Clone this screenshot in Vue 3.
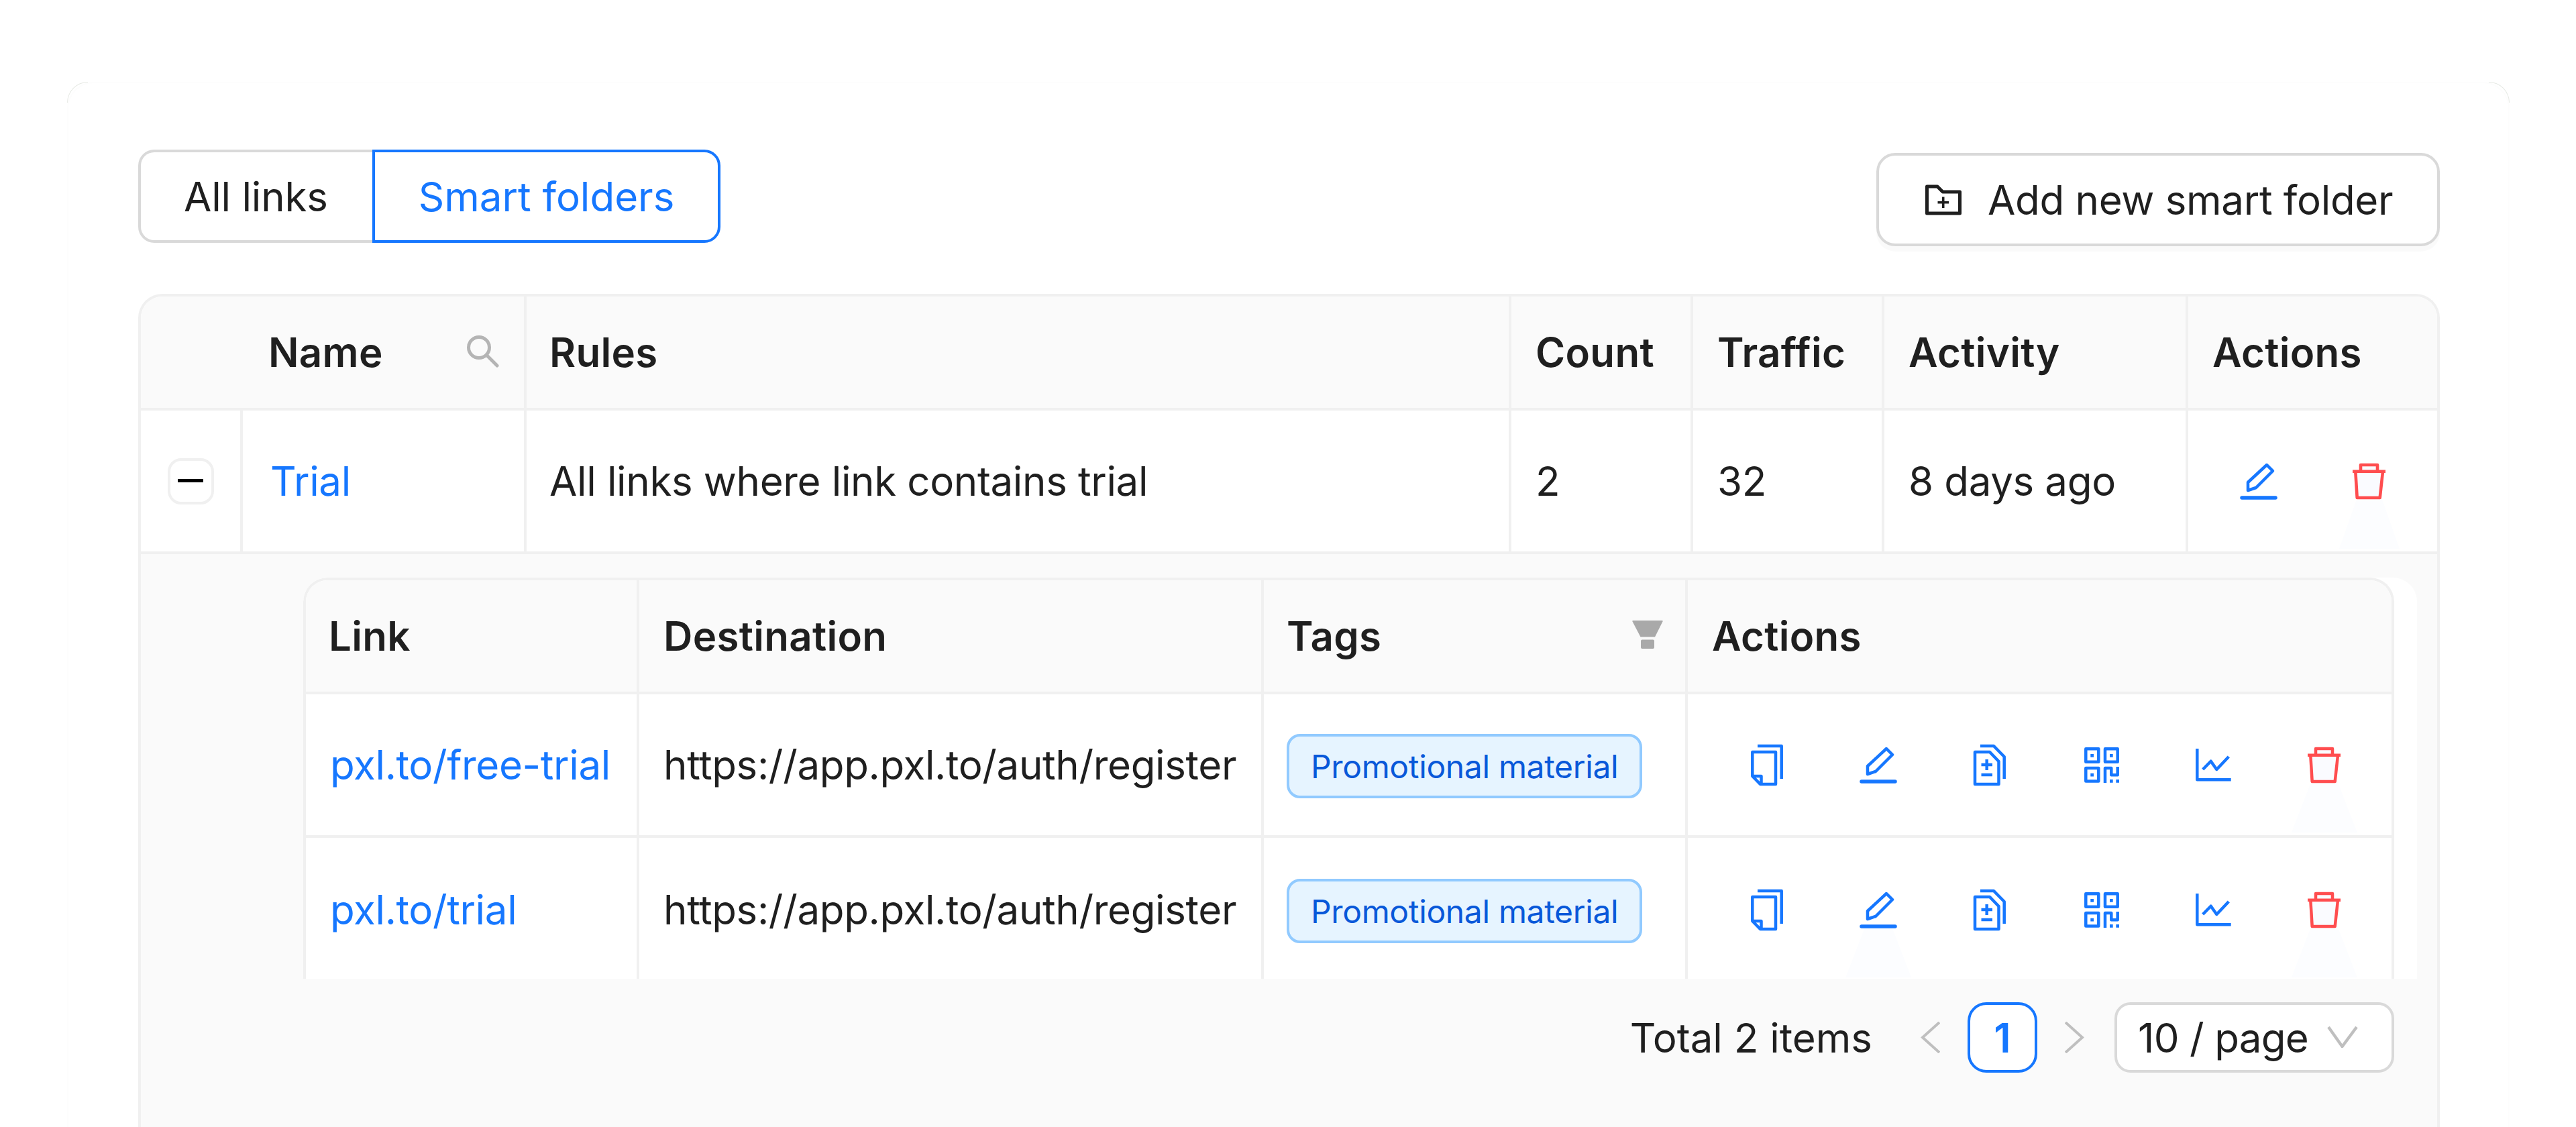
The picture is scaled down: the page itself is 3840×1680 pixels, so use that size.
<script setup>
const icons = {
  copy: { box: '-1 5 70 70', d: 'M20 12H55.7V61M12.3 21H47V69H24L12.3 57ZM12.3 57H25.5V69' },
  edit: { box: '165 5 70 70', d: 'M212 16L221 25L196 50L184 54V42Z', thick: 'M175 65H225' },
  doc: { box: '1 5 70 70', d: 'M14 21H36L49.5 35V69H14ZM22 12H42L57.7 28V61M23.5 40H40M31.7 32V48M23.5 55H40' },
  qr: {
    box: '167 5 70 70',
    d: 'M178.3 16.3H197.3V35.7H178.3ZM207 16.3H225.7V35.7H207ZM178.3 45H197.3V64.4H178.3ZM207 67V45H216.3V55.3H225.7V43',
    fill: 'M185.3 24H190V28.7H185.3ZM214 24H218.7V28.7H214ZM185.3 52.7H190V57.4H185.3ZM214 62H218.7V66.7H214ZM223.3 62H228V66.7H223.3Z',
  },
  chart: { box: '3 5 70 70', d: 'M14.3 16V62.3H64.7M22.7 47L34.7 34.7L43.3 47L61.3 28' },
  trash: { box: '170 5 70 70', d: 'M184.3 26L186.7 65H220.7L225 26M192 25V16H217V25M180 25.7H229', danger: true },
}
const rowIcons = [
  [{ n: 'copy' }, { n: 'edit' }, { n: 'doc' }, { n: 'qr' }, { n: 'chart' }, { n: 'trash', glow: true }],
  [{ n: 'copy' }, { n: 'edit', glow: true }, { n: 'doc' }, { n: 'qr' }, { n: 'chart' }, { n: 'trash', glow: true }],
]
const links = ['pxl.to/free-trial', 'pxl.to/trial']
</script>

<template>
  <div class="card">
    <div class="toolbar">
      <div class="tabs">
        <button class="tab">All links</button>
        <button class="tab active">Smart folders</button>
      </div>
      <button class="add">
        <svg class="folder" viewBox="20 4 54 46" width="54" height="46" fill="none" stroke="#1f1f1f" stroke-width="5" stroke-linejoin="round">
          <path d="M22.5 7H38L46 15H71.5V47H22.5Z" />
          <path d="M38.5 30.7H55M46.7 22.5V39" stroke-width="3.6" />
        </svg>
        <span>Add new smart folder</span>
      </button>
    </div>

    <div class="table">
      <div class="row head outer-cols">
        <div class="cell span2 name-head">
          <span>Name</span>
          <svg viewBox="0 0 50 50" width="50" height="50" fill="none" stroke="#b4b4b4" stroke-width="5">
            <circle cx="20" cy="19" r="15.5" />
            <path d="M31 30L47 46" stroke-linecap="round" />
          </svg>
        </div>
        <div class="cell rules">Rules</div>
        <div class="cell">Count</div>
        <div class="cell">Traffic</div>
        <div class="cell">Activity</div>
        <div class="cell last">Actions</div>
      </div>
      <div class="row body outer-cols">
        <div class="cell expand"><span class="minus"></span></div>
        <div class="cell link trial">Trial</div>
        <div class="cell rules">All links where link contains trial</div>
        <div class="cell">2</div>
        <div class="cell">32</div>
        <div class="cell">8 days ago</div>
        <div class="cell last outer-actions">
          <span class="ic">
            <svg :viewBox="icons.edit.box" width="70" height="70" fill="none" stroke="#1677ff" stroke-width="4.5" stroke-linejoin="round">
              <path :d="icons.edit.d" />
              <path :d="icons.edit.thick" stroke-width="5.5" stroke-linecap="round" />
            </svg>
          </span>
          <span class="ic">
            <svg class="trash" :viewBox="icons.trash.box" width="70" height="70" fill="none" stroke="#ff4d4f" stroke-width="4.6" stroke-linejoin="round">
              <path :d="icons.trash.d" />
            </svg>
            <i class="glow short"></i>
          </span>
        </div>
      </div>

      <div class="expanded">
        <div class="sheet">
          <div class="nested">
            <div class="row head inner-cols">
              <div class="cell flush">Link</div>
              <div class="cell">Destination</div>
              <div class="cell flush tags-head">
                <span>Tags</span>
                <svg viewBox="0 0 46 42" width="46" height="42" fill="#a9a9a9">
                  <path d="M1 0H45Q46 0 45.5 1.5L34 24.5H12.5L0.5 1.5Q0 0 1 0Z" />
                  <rect x="13" y="28.5" width="20" height="13.5" rx="2" />
                </svg>
              </div>
              <div class="cell last">Actions</div>
            </div>
            <div v-for="(link, r) in links" :key="link" class="row body inner-cols" :class="{ noline: r === 1 }">
              <div class="cell link">{{ link }}</div>
              <div class="cell">https://app.pxl.to/auth/register</div>
              <div class="cell flush"><span class="tag">Promotional material</span></div>
              <div class="cell last inner-actions">
                <span v-for="it in rowIcons[r]" :key="it.n" class="ic">
                  <svg
                    :viewBox="icons[it.n].box"
                    :class="{ trash: icons[it.n].danger }"
                    width="70"
                    height="70"
                    fill="none"
                    :stroke="icons[it.n].danger ? '#ff4d4f' : '#1677ff'"
                    stroke-width="4.5"
                    stroke-linejoin="round"
                  >
                    <path :d="icons[it.n].d" />
                    <path v-if="icons[it.n].thick" :d="icons[it.n].thick" stroke-width="5.5" stroke-linecap="round" />
                    <path v-if="icons[it.n].fill" :d="icons[it.n].fill" fill="#1677ff" stroke="none" />
                  </svg>
                  <i v-if="it.glow" class="glow"></i>
                </span>
              </div>
            </div>
          </div>
        </div>

        <div class="pager">
          <span class="total">Total 2 items</span>
          <svg class="prev" viewBox="0 0 29 47" width="29" height="47" fill="none" stroke="#bfbfbf" stroke-width="4">
            <path d="M28 1L3 23.5L28 46" />
          </svg>
          <span class="page">1</span>
          <svg class="next" viewBox="0 0 29 47" width="29" height="47" fill="none" stroke="#bfbfbf" stroke-width="4">
            <path d="M1 1L26 23.5L1 46" />
          </svg>
          <span class="size">
            <span>10 / page</span>
            <svg viewBox="0 0 46 32" width="46" height="32" fill="none" stroke="#bfbfbf" stroke-width="4.4">
              <path d="M2 1L22.5 30L44 1" />
            </svg>
          </span>
        </div>
      </div>
    </div>
  </div>
</template>

<style>
html, body {
  margin: 0;
  height: 1680px;
  overflow: hidden;
  background: #fff;
}
</style>

<style scoped>
.card {
  box-sizing: border-box;
  position: relative;
  margin: 122px 0 0 100px;
  width: 3641px;
  height: 1700px;
  padding: 99px 102px 0 104px;
  border: 2px solid #fdfdfd;
  border-radius: 40px;
  background: #fff;
  font-family: Inter, "Liberation Sans", sans-serif;
  font-size: 60px;
  color: #1f1f1f;
}
.card::before,
.card::after {
  content: "";
  position: absolute;
  top: -2px;
  width: 30px;
  height: 30px;
  border-top: 1px solid #e6e9e4;
}
.card::before {
  left: -2px;
  border-left: 1px solid #e6e9e4;
  border-top-left-radius: 40px;
}
.card::after {
  right: -2px;
  border-right: 1px solid #e6e9e4;
  border-top-right-radius: 40px;
}
.toolbar {
  display: flex;
  justify-content: space-between;
  align-items: flex-start;
  height: 144px;
  margin-bottom: 71px;
}
.tabs {
  display: flex;
}
.tab {
  box-sizing: border-box;
  height: 139px;
  padding: 0 70px 0 64px;
  border: 4px solid #d9d9d9;
  border-right: 0;
  border-radius: 24px 0 0 24px;
  background: #fff;
  color: #1f1f1f;
  font: inherit;
  letter-spacing: -0.2px;
}
.tab.active {
  margin-left: -4px;
  padding: 0 65px;
  border: 4px solid #1677ff;
  border-radius: 0 24px 24px 0;
  color: #1677ff;
  letter-spacing: 0;
}
.add {
  box-sizing: border-box;
  display: flex;
  align-items: center;
  gap: 39px;
  width: 840px;
  height: 139px;
  margin-top: 5px;
  padding: 0 0 0 69px;
  border: 4px solid #d9d9d9;
  border-radius: 28px;
  background: #fff;
  color: #1f1f1f;
  font: inherit;
  letter-spacing: -0.3px;
  box-shadow: 0 8px 0 rgba(0, 0, 0, 0.02);
}
.table {
  box-sizing: border-box;
  width: 3431px;
  height: 1260px;
  border: 4px solid #f0f0f0;
  border-bottom: 0;
  border-radius: 36px 36px 0 0;
  overflow: hidden;
  background: #fff;
}
.row {
  display: grid;
}
.outer-cols {
  grid-template-columns: 152px 423px 1468px 271px 285px 453px 371px;
}
.inner-cols {
  grid-template-columns: 497px 931px 632px 1049px;
}
.cell {
  box-sizing: border-box;
  display: flex;
  align-items: center;
  padding: 0 36px;
  border-right: 4px solid #f0f0f0;
  border-bottom: 4px solid #f0f0f0;
  white-space: nowrap;
}
.cell.last {
  border-right: 0;
}
.cell.rules,
.cell.flush {
  padding-left: 34px;
}
.head .cell {
  height: 170px;
  background: #fafafa;
  font-weight: 600;
  letter-spacing: 0.3px;
}
.body .cell {
  height: 214px;
  background: #fff;
  letter-spacing: -0.35px;
}
.noline .cell {
  border-bottom: 0;
}
.span2 {
  grid-column: span 2;
}
.name-head {
  justify-content: space-between;
}
.head .name-head {
  padding: 0 37px 0 190px;
}
.name-head svg {
  margin-top: -2px;
}
.tags-head {
  justify-content: space-between;
}
.head .tags-head {
  padding-right: 33px;
}
.tags-head svg {
  margin-top: -4px;
}
.link {
  color: #1677ff;
}
.cell.trial {
  padding-left: 41px;
}
.cell.expand {
  padding: 0 0 0 40px;
}
.minus {
  box-sizing: border-box;
  position: relative;
  display: block;
  width: 69px;
  height: 69px;
  border: 4px solid #f0f0f0;
  border-radius: 20px;
  background: #fff;
}
.minus::after {
  content: "";
  position: absolute;
  left: 11px;
  right: 12px;
  top: 27px;
  height: 5px;
  background: #000;
}
.ic {
  position: relative;
  display: block;
  width: 70px;
  height: 70px;
}
.ic svg {
  position: relative;
  z-index: 1;
  display: block;
}
.trash path {
  fill: #fafbff;
}
.glow {
  position: absolute;
  left: -14px;
  right: -14px;
  top: 60px;
  height: 76px;
  background: #fcfdff;
  clip-path: polygon(30% 0, 70% 0, 100% 100%, 0 100%);
}
.glow.short {
  left: -10px;
  right: -10px;
}
.cell.outer-actions {
  gap: 95px;
  padding-left: 70px;
}
.cell.inner-actions {
  gap: 96.2px;
  padding-left: 83px;
}
.expanded {
  height: 860px;
  padding: 35px 34px 0 242px;
  background: #fafafa;
}
.sheet {
  box-sizing: border-box;
  width: 3151px;
  height: 598px;
  overflow: hidden;
  border-radius: 36px 36px 0 0;
  background: #fff;
}
.nested {
  box-sizing: border-box;
  width: 3117px;
  border: 4px solid #f0f0f0;
  border-bottom: 0;
  border-radius: 36px 36px 0 0;
  overflow: hidden;
}
.body .cell .tag {
  box-sizing: border-box;
  display: flex;
  align-items: center;
  height: 96px;
  margin-top: 4px;
  padding: 0 32px;
  border: 4px solid #91caff;
  border-radius: 20px;
  background: #e6f4ff;
  color: #0958d9;
  font-size: 48px;
  letter-spacing: -0.35px;
}
.pager {
  display: flex;
  align-items: center;
  justify-content: flex-end;
  width: 3117px;
  height: 105px;
  margin-top: 35px;
}
.total {
  margin-right: 72px;
}
.page {
  box-sizing: border-box;
  display: flex;
  align-items: center;
  justify-content: center;
  width: 104px;
  height: 105px;
  margin: 0 41px;
  border: 4px solid #1677ff;
  border-radius: 28px;
  background: #fff;
  color: #1677ff;
  font-weight: 600;
}
.size {
  box-sizing: border-box;
  display: flex;
  align-items: center;
  justify-content: space-between;
  width: 417px;
  height: 105px;
  margin-left: 45px;
  padding: 0 50px 0 31px;
  border: 4px solid #d9d9d9;
  border-radius: 24px;
  background: #fff;
  letter-spacing: -0.7px;
}
.size svg {
  margin-top: -2px;
}
</style>
